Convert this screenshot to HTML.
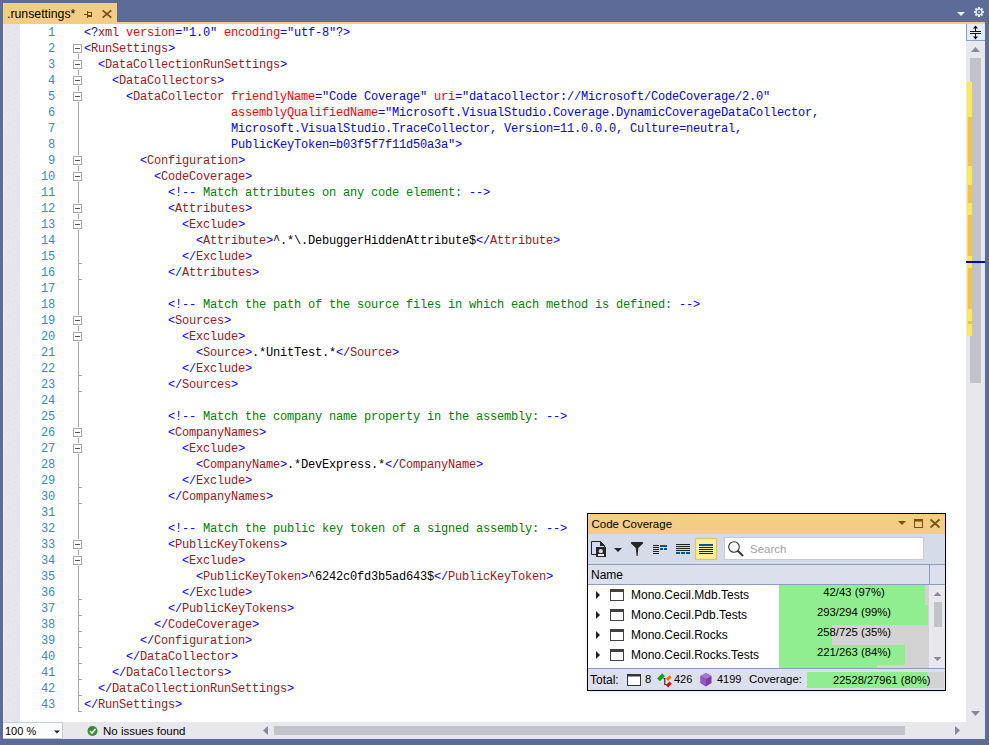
<!DOCTYPE html>
<html><head><meta charset="utf-8">
<style>
*{margin:0;padding:0;box-sizing:border-box}
html,body{width:989px;height:745px;overflow:hidden;background:#5D6B99;position:relative;font-family:"Liberation Sans",sans-serif}
.abs{position:absolute}
#tab{position:absolute;left:3px;top:3px;width:114px;height:21px;background:#F5CC84}
#tabtxt{position:absolute;left:4px;top:4px;font-size:12.3px;color:#000;white-space:nowrap}
#strip{position:absolute;left:3px;top:22px;width:982px;height:2px;background:#F5CC84}
#editor{position:absolute;left:3px;top:24px;width:963px;height:698px;background:#fff;overflow:hidden}
#margin{position:absolute;left:0;top:0;width:17px;height:698px;background:#E6E7ED}
#nums{position:absolute;left:0;top:1px;width:52px}
.num{position:absolute;right:0;width:40px;text-align:right;height:16px;line-height:16px;font-family:"Liberation Mono",monospace;font-size:12px;letter-spacing:-0.2012px;color:#2B91AF}
#code{position:absolute;left:81px;top:1px}
.ln{position:absolute;left:0;height:16px;line-height:16px;white-space:pre;font-family:"Liberation Mono",monospace;font-size:12px;letter-spacing:-0.2012px;color:#000}
.b{color:#0000FF}.d{color:#A31515}.r{color:#FF0000}.g{color:#008000}
#fold{position:absolute;left:70px;top:0}
.fb{position:absolute;left:0;width:9px;height:9px;border:1px solid #A5A5A5;background:#fff}
.fb::after{content:"";position:absolute;left:1px;top:3px;width:5px;height:1px;background:#555}
.fl{position:absolute;left:5px;width:1px;background:#A5A5A5}
.ft{position:absolute;left:5px;width:4px;height:1px;background:#A5A5A5}
#vsb{position:absolute;left:966px;top:24px;width:19px;height:715px;background:#E8E8EC}
#split{position:absolute;left:0;top:0;width:19px;height:17px;background:#E6ECFA;border-left:1px solid #8A9BD0;border-bottom:1px solid #8A9BD0}
#hsb{position:absolute;left:3px;top:722px;width:963px;height:17px;background:#E8E8EC}
#zoom{position:absolute;left:0;top:0;width:60px;height:17px;background:#FCFCFC;border:1px solid #C2CCE0;border-left:none}
#zoomtxt{position:absolute;left:2px;top:1.5px;font-size:11px;color:#000;white-space:nowrap}
#status{position:absolute;left:100px;top:3px;font-size:11.5px;color:#000;white-space:nowrap}
/* panel */
#panel{position:absolute;left:587px;top:513px;width:359px;height:178px;border:1px solid #000;background:#fff;box-shadow:0 1px 5px rgba(0,0,0,0.09)}
#ptitle{position:absolute;left:0;top:0;width:357px;height:20px;background:#F5CC84}
#ptitletxt{position:absolute;left:3.5px;top:4px;font-size:11.5px;color:#000;white-space:nowrap}
#ptool{position:absolute;left:0;top:20px;width:357px;height:31px;background:#D6DBE9;border-bottom:1px solid #8E9BBC}
#phead{position:absolute;left:0;top:51px;width:357px;height:20px;background:#DCE0ED;border-bottom:1px solid #8E9BBC}
#pfoot{position:absolute;left:0;top:154px;width:357px;height:22px;background:#DCE0ED;border-top:1px solid #8E9BBC}
#prows{position:absolute;left:0;top:71px;width:357px;height:83px;background:#fff;overflow:hidden}
.ptxt{position:absolute;font-size:12px;color:#000;white-space:nowrap}
.cov{font-size:11.3px}
</style></head><body>
<div id="tab"><div id="tabtxt">.runsettings*</div>
<svg class="abs" style="left:0;top:0" width="114" height="21">
 <g fill="#6F4A1B">
  <rect x="81" y="11" width="3" height="1"/>
  <rect x="84" y="8" width="1" height="7"/>
  <rect x="84" y="9" width="5" height="1"/>
  <rect x="88" y="9" width="1" height="5"/>
  <rect x="84" y="12" width="5" height="2"/>
 </g>
 <path d="M99.6 7.4 L108.3 14.6 M108.3 7.4 L99.6 14.6" stroke="#6F4A1B" stroke-width="1.6" fill="none"/>
</svg>
</div>
<div id="strip"></div>
<svg class="abs" style="left:950px;top:0" width="39" height="22">
 <path d="M7 12 L15 12 L11 16 Z" fill="#E6EBF8"/>
 <g transform="translate(29,12)" fill="#E6EBF8">
  <circle r="3.6"/>
  <rect x="-1" y="-5" width="2" height="10"/>
  <rect x="-5" y="-1" width="10" height="2"/>
  <rect x="-1" y="-5" width="2" height="10" transform="rotate(45)"/>
  <rect x="-1" y="-5" width="2" height="10" transform="rotate(-45)"/>
  <circle r="2.3" fill="#5D6B99"/>
  <circle r="0.9" fill="#C9D0E6"/>
 </g>
</svg>
<div id="editor">
 <div id="margin"><svg class="abs" style="left:0;top:0" width="17" height="698"><defs><pattern id="dotp" width="17" height="64" patternUnits="userSpaceOnUse"><g fill="#DCDFF0"><rect x="4" y="3" width="1" height="1"/><rect x="6" y="1" width="1" height="1"/><rect x="12" y="1" width="1" height="1"/><rect x="13" y="3" width="1" height="1"/><rect x="2" y="4" width="1" height="1"/><rect x="5" y="7" width="1" height="1"/><rect x="12" y="5" width="1" height="1"/><rect x="13" y="4" width="1" height="1"/><rect x="1" y="9" width="1" height="1"/><rect x="6" y="8" width="1" height="1"/><rect x="12" y="10" width="1" height="1"/><rect x="16" y="9" width="1" height="1"/><rect x="3" y="15" width="1" height="1"/><rect x="5" y="12" width="1" height="1"/><rect x="12" y="14" width="1" height="1"/><rect x="16" y="12" width="1" height="1"/><rect x="3" y="17" width="1" height="1"/><rect x="7" y="16" width="1" height="1"/><rect x="9" y="16" width="1" height="1"/><rect x="16" y="16" width="1" height="1"/><rect x="4" y="20" width="1" height="1"/><rect x="5" y="20" width="1" height="1"/><rect x="10" y="21" width="1" height="1"/><rect x="13" y="23" width="1" height="1"/><rect x="4" y="27" width="1" height="1"/><rect x="5" y="25" width="1" height="1"/><rect x="11" y="26" width="1" height="1"/><rect x="13" y="26" width="1" height="1"/><rect x="1" y="31" width="1" height="1"/><rect x="5" y="29" width="1" height="1"/><rect x="10" y="28" width="1" height="1"/><rect x="13" y="28" width="1" height="1"/><rect x="4" y="33" width="1" height="1"/><rect x="6" y="35" width="1" height="1"/><rect x="10" y="33" width="1" height="1"/><rect x="16" y="35" width="1" height="1"/><rect x="4" y="39" width="1" height="1"/><rect x="6" y="36" width="1" height="1"/><rect x="11" y="38" width="1" height="1"/><rect x="13" y="37" width="1" height="1"/><rect x="4" y="40" width="1" height="1"/><rect x="5" y="41" width="1" height="1"/><rect x="10" y="43" width="1" height="1"/><rect x="15" y="40" width="1" height="1"/><rect x="3" y="47" width="1" height="1"/><rect x="5" y="44" width="1" height="1"/><rect x="9" y="45" width="1" height="1"/><rect x="14" y="44" width="1" height="1"/><rect x="3" y="51" width="1" height="1"/><rect x="6" y="51" width="1" height="1"/><rect x="10" y="51" width="1" height="1"/><rect x="14" y="49" width="1" height="1"/><rect x="2" y="53" width="1" height="1"/><rect x="6" y="53" width="1" height="1"/><rect x="10" y="55" width="1" height="1"/><rect x="16" y="52" width="1" height="1"/><rect x="1" y="56" width="1" height="1"/><rect x="5" y="56" width="1" height="1"/><rect x="11" y="57" width="1" height="1"/><rect x="16" y="58" width="1" height="1"/><rect x="4" y="62" width="1" height="1"/><rect x="6" y="60" width="1" height="1"/><rect x="10" y="61" width="1" height="1"/><rect x="16" y="60" width="1" height="1"/></g></pattern></defs><rect x="0" width="17" height="698" fill="url(#dotp)"/><rect x="0" width="1" height="698" fill="#EFEFF3"/></svg></div>
 <div id="nums"><div class="num" style="top:0px">1</div><div class="num" style="top:16px">2</div><div class="num" style="top:32px">3</div><div class="num" style="top:48px">4</div><div class="num" style="top:64px">5</div><div class="num" style="top:80px">6</div><div class="num" style="top:96px">7</div><div class="num" style="top:112px">8</div><div class="num" style="top:128px">9</div><div class="num" style="top:144px">10</div><div class="num" style="top:160px">11</div><div class="num" style="top:176px">12</div><div class="num" style="top:192px">13</div><div class="num" style="top:208px">14</div><div class="num" style="top:224px">15</div><div class="num" style="top:240px">16</div><div class="num" style="top:256px">17</div><div class="num" style="top:272px">18</div><div class="num" style="top:288px">19</div><div class="num" style="top:304px">20</div><div class="num" style="top:320px">21</div><div class="num" style="top:336px">22</div><div class="num" style="top:352px">23</div><div class="num" style="top:368px">24</div><div class="num" style="top:384px">25</div><div class="num" style="top:400px">26</div><div class="num" style="top:416px">27</div><div class="num" style="top:432px">28</div><div class="num" style="top:448px">29</div><div class="num" style="top:464px">30</div><div class="num" style="top:480px">31</div><div class="num" style="top:496px">32</div><div class="num" style="top:512px">33</div><div class="num" style="top:528px">34</div><div class="num" style="top:544px">35</div><div class="num" style="top:560px">36</div><div class="num" style="top:576px">37</div><div class="num" style="top:592px">38</div><div class="num" style="top:608px">39</div><div class="num" style="top:624px">40</div><div class="num" style="top:640px">41</div><div class="num" style="top:656px">42</div><div class="num" style="top:672px">43</div></div>
 <div id="fold"><div class="fb" style="top:20px"></div><div class="fb" style="top:36px"></div><div class="fb" style="top:52px"></div><div class="fb" style="top:68px"></div><div class="fb" style="top:132px"></div><div class="fb" style="top:148px"></div><div class="fb" style="top:180px"></div><div class="fb" style="top:196px"></div><div class="fb" style="top:292px"></div><div class="fb" style="top:308px"></div><div class="fb" style="top:404px"></div><div class="fb" style="top:420px"></div><div class="fb" style="top:516px"></div><div class="fb" style="top:532px"></div><div class="fl" style="top:30px;height:5px"></div><div class="fl" style="top:46px;height:5px"></div><div class="fl" style="top:62px;height:5px"></div><div class="fl" style="top:78px;height:53px"></div><div class="fl" style="top:142px;height:5px"></div><div class="fl" style="top:158px;height:21px"></div><div class="fl" style="top:190px;height:5px"></div><div class="fl" style="top:206px;height:85px"></div><div class="fl" style="top:302px;height:5px"></div><div class="fl" style="top:318px;height:85px"></div><div class="fl" style="top:414px;height:5px"></div><div class="fl" style="top:430px;height:85px"></div><div class="fl" style="top:526px;height:5px"></div><div class="fl" style="top:542px;height:146px"></div><div class="ft" style="top:239px"></div><div class="ft" style="top:255px"></div><div class="ft" style="top:351px"></div><div class="ft" style="top:367px"></div><div class="ft" style="top:463px"></div><div class="ft" style="top:479px"></div><div class="ft" style="top:575px"></div><div class="ft" style="top:591px"></div><div class="ft" style="top:607px"></div><div class="ft" style="top:623px"></div><div class="ft" style="top:639px"></div><div class="ft" style="top:655px"></div><div class="ft" style="top:671px"></div><div class="ft" style="top:687px"></div></div>
 <div id="code"><div class="ln" style="top:0px"><span class="b">&lt;?</span><span class="d">xml</span> <span class="r">version</span><span class="b">=&quot;1.0&quot;</span> <span class="r">encoding</span><span class="b">=&quot;utf-8&quot;</span><span class="b">?&gt;</span></div><div class="ln" style="top:16px"><span class="b">&lt;</span><span class="d">RunSettings</span><span class="b">&gt;</span></div><div class="ln" style="top:32px">  <span class="b">&lt;</span><span class="d">DataCollectionRunSettings</span><span class="b">&gt;</span></div><div class="ln" style="top:48px">    <span class="b">&lt;</span><span class="d">DataCollectors</span><span class="b">&gt;</span></div><div class="ln" style="top:64px">      <span class="b">&lt;</span><span class="d">DataCollector</span> <span class="r">friendlyName</span><span class="b">=&quot;Code Coverage&quot;</span> <span class="r">uri</span><span class="b">=&quot;datacollector://Microsoft/CodeCoverage/2.0&quot;</span></div><div class="ln" style="top:80px">                     <span class="r">assemblyQualifiedName</span><span class="b">=&quot;Microsoft.VisualStudio.Coverage.DynamicCoverageDataCollector,</span></div><div class="ln" style="top:96px"><span class="b">                     Microsoft.VisualStudio.TraceCollector, Version=11.0.0.0, Culture=neutral,</span></div><div class="ln" style="top:112px"><span class="b">                     PublicKeyToken=b03f5f7f11d50a3a&quot;&gt;</span></div><div class="ln" style="top:128px">        <span class="b">&lt;</span><span class="d">Configuration</span><span class="b">&gt;</span></div><div class="ln" style="top:144px">          <span class="b">&lt;</span><span class="d">CodeCoverage</span><span class="b">&gt;</span></div><div class="ln" style="top:160px">            <span class="b">&lt;!--</span><span class="g"> Match attributes on any code element: </span><span class="b">--&gt;</span></div><div class="ln" style="top:176px">            <span class="b">&lt;</span><span class="d">Attributes</span><span class="b">&gt;</span></div><div class="ln" style="top:192px">              <span class="b">&lt;</span><span class="d">Exclude</span><span class="b">&gt;</span></div><div class="ln" style="top:208px">                <span class="b">&lt;</span><span class="d">Attribute</span><span class="b">&gt;</span><span class="k">^.*\.DebuggerHiddenAttribute$</span><span class="b">&lt;/</span><span class="d">Attribute</span><span class="b">&gt;</span></div><div class="ln" style="top:224px">              <span class="b">&lt;/</span><span class="d">Exclude</span><span class="b">&gt;</span></div><div class="ln" style="top:240px">            <span class="b">&lt;/</span><span class="d">Attributes</span><span class="b">&gt;</span></div><div class="ln" style="top:256px"></div><div class="ln" style="top:272px">            <span class="b">&lt;!--</span><span class="g"> Match the path of the source files in which each method is defined: </span><span class="b">--&gt;</span></div><div class="ln" style="top:288px">            <span class="b">&lt;</span><span class="d">Sources</span><span class="b">&gt;</span></div><div class="ln" style="top:304px">              <span class="b">&lt;</span><span class="d">Exclude</span><span class="b">&gt;</span></div><div class="ln" style="top:320px">                <span class="b">&lt;</span><span class="d">Source</span><span class="b">&gt;</span><span class="k">.*UnitTest.*</span><span class="b">&lt;/</span><span class="d">Source</span><span class="b">&gt;</span></div><div class="ln" style="top:336px">              <span class="b">&lt;/</span><span class="d">Exclude</span><span class="b">&gt;</span></div><div class="ln" style="top:352px">            <span class="b">&lt;/</span><span class="d">Sources</span><span class="b">&gt;</span></div><div class="ln" style="top:368px"></div><div class="ln" style="top:384px">            <span class="b">&lt;!--</span><span class="g"> Match the company name property in the assembly: </span><span class="b">--&gt;</span></div><div class="ln" style="top:400px">            <span class="b">&lt;</span><span class="d">CompanyNames</span><span class="b">&gt;</span></div><div class="ln" style="top:416px">              <span class="b">&lt;</span><span class="d">Exclude</span><span class="b">&gt;</span></div><div class="ln" style="top:432px">                <span class="b">&lt;</span><span class="d">CompanyName</span><span class="b">&gt;</span><span class="k">.*DevExpress.*</span><span class="b">&lt;/</span><span class="d">CompanyName</span><span class="b">&gt;</span></div><div class="ln" style="top:448px">              <span class="b">&lt;/</span><span class="d">Exclude</span><span class="b">&gt;</span></div><div class="ln" style="top:464px">            <span class="b">&lt;/</span><span class="d">CompanyNames</span><span class="b">&gt;</span></div><div class="ln" style="top:480px"></div><div class="ln" style="top:496px">            <span class="b">&lt;!--</span><span class="g"> Match the public key token of a signed assembly: </span><span class="b">--&gt;</span></div><div class="ln" style="top:512px">            <span class="b">&lt;</span><span class="d">PublicKeyTokens</span><span class="b">&gt;</span></div><div class="ln" style="top:528px">              <span class="b">&lt;</span><span class="d">Exclude</span><span class="b">&gt;</span></div><div class="ln" style="top:544px">                <span class="b">&lt;</span><span class="d">PublicKeyToken</span><span class="b">&gt;</span><span class="k">^6242c0fd3b5ad643$</span><span class="b">&lt;/</span><span class="d">PublicKeyToken</span><span class="b">&gt;</span></div><div class="ln" style="top:560px">              <span class="b">&lt;/</span><span class="d">Exclude</span><span class="b">&gt;</span></div><div class="ln" style="top:576px">            <span class="b">&lt;/</span><span class="d">PublicKeyTokens</span><span class="b">&gt;</span></div><div class="ln" style="top:592px">          <span class="b">&lt;/</span><span class="d">CodeCoverage</span><span class="b">&gt;</span></div><div class="ln" style="top:608px">        <span class="b">&lt;/</span><span class="d">Configuration</span><span class="b">&gt;</span></div><div class="ln" style="top:624px">      <span class="b">&lt;/</span><span class="d">DataCollector</span><span class="b">&gt;</span></div><div class="ln" style="top:640px">    <span class="b">&lt;/</span><span class="d">DataCollectors</span><span class="b">&gt;</span></div><div class="ln" style="top:656px">  <span class="b">&lt;/</span><span class="d">DataCollectionRunSettings</span><span class="b">&gt;</span></div><div class="ln" style="top:672px"><span class="b">&lt;/</span><span class="d">RunSettings</span><span class="b">&gt;</span></div></div>
</div>
<div id="vsb">
 <div id="split">
  <svg class="abs" style="left:-1px;top:0" width="19" height="17">
   <rect x="4" y="7" width="11" height="1" fill="#111"/>
   <rect x="4" y="9" width="11" height="1" fill="#111"/>
   <rect x="9" y="3" width="1" height="4" fill="#111"/>
   <rect x="9" y="10" width="1" height="4" fill="#111"/>
   <path d="M9.5 1.5 L12 4.5 L7 4.5 Z" fill="#111"/>
   <path d="M9.5 15.5 L12 12.5 L7 12.5 Z" fill="#111"/>
  </svg>
 </div>
 <svg class="abs" style="left:0;top:0" width="19" height="715">
  <path d="M5 28 L14 28 L9.5 23 Z" fill="#868999"/>
  <rect x="4" y="34" width="11" height="325" fill="#C2C3C9"/>
  <path d="M5 687 L14 687 L9.5 692 Z" fill="#868999"/>
  <g>
   <rect x="1" y="58" width="5" height="35" fill="#FCE85C"/>
   <rect x="1.6" y="93" width="3.8" height="49" fill="#F6C43A"/>
   <rect x="1" y="142" width="5" height="19" fill="#FCE85C"/>
   <rect x="1.6" y="161" width="3.8" height="18" fill="#F6C43A"/>
   <rect x="1" y="179" width="5" height="12" fill="#FCE85C"/>
   <rect x="1.6" y="191" width="3.8" height="41" fill="#F6C43A"/>
   <rect x="1" y="232" width="5" height="12" fill="#FCE85C"/>
   <rect x="1.6" y="244" width="3.8" height="41" fill="#F6C43A"/>
   <rect x="1" y="285" width="5" height="12" fill="#FCE85C"/>
   <rect x="1.6" y="297" width="3.8" height="3" fill="#F6C43A"/>
   <rect x="1" y="300" width="5" height="12" fill="#FCE85C"/>
  </g>
  <rect x="0" y="237" width="19" height="2" fill="#0000C0"/>
 </svg>
</div>
<div id="hsb">
 <div id="zoom"><div id="zoomtxt">100 %</div>
  <svg class="abs" style="left:0;top:0" width="60" height="17"><path d="M51 7.5 L57 7.5 L54 10.5 Z" fill="#1E1E3C"/></svg>
 </div>
 <svg class="abs" style="left:0;top:0" width="963" height="17">
  <circle cx="89.5" cy="9" r="5" fill="#388A34"/>
  <path d="M87 9 L89 11 L92.5 7" stroke="#fff" stroke-width="1.6" fill="none"/>
  <path d="M265 4 L265 13 L260 8.5 Z" fill="#868999"/>
  <rect x="271" y="4" width="631" height="9" fill="#C2C3C9"/>
  <path d="M952 4 L952 13 L957 8.5 Z" fill="#868999"/>
 </svg>
 <div id="status">No issues found</div>
</div>
<div id="panel">
 <div id="ptitle"><div id="ptitletxt">Code Coverage</div>
  <svg class="abs" style="left:0;top:0" width="357" height="20">
   <path d="M310 7 L318 7 L314 11 Z" fill="#6E5518"/>
   <rect x="326.5" y="5.5" width="8" height="8" fill="none" stroke="#6E5518" stroke-width="1"/>
   <rect x="326" y="5" width="9" height="2.5" fill="#6E5518"/>
   <path d="M342.5 5.5 L351.5 13.5 M351.5 5.5 L342.5 13.5" stroke="#6E5518" stroke-width="1.7" fill="none"/>
  </svg>
 </div>
 <div id="ptool">
  <svg class="abs" style="left:0;top:0" width="357" height="30">
   <!-- doc+disk -->
   <path d="M3.5 7.5 L12.5 7.5 L16.5 11.5 L16.5 20.5 L3.5 20.5 Z" fill="none" stroke="#252525" stroke-width="1"/>
   <path d="M12 7 L17 12 L12 12 Z" fill="#252525"/>
   <rect x="8" y="13" width="10" height="10" fill="#252525"/>
   <circle cx="12.8" cy="17.2" r="2.1" fill="#D8D8D8"/>
   <rect x="10" y="20" width="6" height="2" fill="#F0F0F0"/>
   <path d="M26 14 L34 14 L30 18 Z" fill="#252525"/>
   <!-- funnel -->
   <path d="M43.5 8 L54.5 8 Q55.5 8 55 9.5 L50.3 14 L49.6 22 L48.6 22 L47.8 14 L43 9.5 Q42.5 8 43.5 8 Z" fill="#252525"/>
   <!-- icon4 -->
   <g fill="#1E1E1E"><rect x="65" y="11" width="6" height="1"/><rect x="65" y="13" width="6" height="1"/><rect x="65" y="15" width="6" height="1"/><rect x="65" y="17" width="6" height="1"/><rect x="65" y="19" width="6" height="1"/></g>
   <g fill="#00539C"><rect x="72" y="11" width="7" height="2"/><rect x="72" y="14" width="3" height="2"/><rect x="76" y="14" width="3" height="2"/></g>
   <!-- icon5 -->
   <g fill="#1E1E1E"><rect x="88" y="10" width="14" height="1"/><rect x="88" y="12" width="14" height="1"/><rect x="88" y="14" width="14" height="1"/><rect x="88" y="16" width="14" height="1"/></g>
   <g fill="#00539C"><rect x="88" y="18" width="4" height="2"/><rect x="93" y="18" width="4" height="2"/><rect x="98" y="18" width="4" height="2"/></g>
   <!-- icon6 button -->
   <rect x="107.5" y="4.5" width="21" height="21" fill="#FFEF9C" stroke="#E5C365" stroke-width="1.3"/>
   <rect x="111" y="10" width="14" height="2" fill="#00539C"/>
   <g fill="#1E1E1E"><rect x="111" y="13" width="14" height="1"/><rect x="111" y="15" width="14" height="1"/><rect x="111" y="17" width="14" height="1"/><rect x="111" y="19" width="14" height="1"/></g>
   <!-- search -->
   <rect x="136.5" y="3.5" width="199" height="22" fill="#fff" stroke="#C9C9CF" stroke-width="1"/>
   <circle cx="146" cy="13" r="5.3" fill="none" stroke="#333" stroke-width="1.1"/>
   <path d="M149.8 16.8 L155 22" stroke="#333" stroke-width="2"/>
  </svg>
  <div class="ptxt" style="left:162px;top:8.5px;color:#A2A2A2;font-size:11.5px">Search</div>
 </div>
 <div id="phead"><div class="ptxt" style="left:3px;top:3px">Name</div><div class="abs" style="left:341px;top:0;width:1px;height:19px;background:#8E9BBC"></div></div>
 <div id="prows">
  <div class="abs" style="left:191px;top:0px;width:150px;height:20px;background:#D3D3D3"></div><div class="abs" style="left:191px;top:0px;width:146px;height:20px;background:#90EE90"></div><svg class="abs" style="left:0;top:0px" width="40" height="20"><path d="M8 6 L12 10 L8 14 Z" fill="#1E1E1E"/><rect x="22.5" y="4.5" width="13" height="11" fill="#fff" stroke="#424242" stroke-width="1"/><rect x="22" y="4" width="14" height="3" fill="#424242"/></svg><div class="ptxt" style="left:43px;top:3px">Mono.Cecil.Mdb.Tests</div><div class="ptxt cov" style="left:191px;width:150px;text-align:center;top:1px">42/43 (97%)</div><div class="abs" style="left:191px;top:20px;width:150px;height:20px;background:#D3D3D3"></div><div class="abs" style="left:191px;top:20px;width:149px;height:20px;background:#90EE90"></div><svg class="abs" style="left:0;top:20px" width="40" height="20"><path d="M8 6 L12 10 L8 14 Z" fill="#1E1E1E"/><rect x="22.5" y="4.5" width="13" height="11" fill="#fff" stroke="#424242" stroke-width="1"/><rect x="22" y="4" width="14" height="3" fill="#424242"/></svg><div class="ptxt" style="left:43px;top:23px">Mono.Cecil.Pdb.Tests</div><div class="ptxt cov" style="left:191px;width:150px;text-align:center;top:21px">293/294 (99%)</div><div class="abs" style="left:191px;top:40px;width:150px;height:20px;background:#D3D3D3"></div><div class="abs" style="left:191px;top:40px;width:53px;height:20px;background:#90EE90"></div><svg class="abs" style="left:0;top:40px" width="40" height="20"><path d="M8 6 L12 10 L8 14 Z" fill="#1E1E1E"/><rect x="22.5" y="4.5" width="13" height="11" fill="#fff" stroke="#424242" stroke-width="1"/><rect x="22" y="4" width="14" height="3" fill="#424242"/></svg><div class="ptxt" style="left:43px;top:43px">Mono.Cecil.Rocks</div><div class="ptxt cov" style="left:191px;width:150px;text-align:center;top:41px">258/725 (35%)</div><div class="abs" style="left:191px;top:60px;width:150px;height:20px;background:#D3D3D3"></div><div class="abs" style="left:191px;top:60px;width:126px;height:20px;background:#90EE90"></div><svg class="abs" style="left:0;top:60px" width="40" height="20"><path d="M8 6 L12 10 L8 14 Z" fill="#1E1E1E"/><rect x="22.5" y="4.5" width="13" height="11" fill="#fff" stroke="#424242" stroke-width="1"/><rect x="22" y="4" width="14" height="3" fill="#424242"/></svg><div class="ptxt" style="left:43px;top:63px">Mono.Cecil.Rocks.Tests</div><div class="ptxt cov" style="left:191px;width:150px;text-align:center;top:61px">221/263 (84%)</div><div class="abs" style="left:191px;top:80px;width:150px;height:20px;background:#D3D3D3"></div><div class="abs" style="left:191px;top:80px;width:98px;height:20px;background:#90EE90"></div><svg class="abs" style="left:341px;top:0" width="16" height="83"><rect width="16" height="83" fill="#E8E8EC"/><path d="M4.5 11 L12.5 11 L8.5 7 Z" fill="#868999"/><rect x="5" y="17" width="8" height="25" fill="#C2C3C9"/><path d="M4.5 72 L12.5 72 L8.5 76 Z" fill="#868999"/></svg>
 </div>
 <div id="pfoot">
  <div class="ptxt" style="left:2px;top:4px">Total:</div>
  <svg class="abs" style="left:0;top:0" width="357" height="21">
   <rect x="39.5" y="5.5" width="13" height="11" fill="#fff" stroke="#333" stroke-width="1"/>
   <rect x="39" y="5" width="14" height="2.5" fill="#333"/>
   <g transform="translate(73,8.3) rotate(45)"><rect x="-2" y="-3.6" width="4" height="7.2" fill="#16A316"/></g>
   <path d="M75.5 9.5 L76.8 9.5 L76.8 15.5 L78.5 15.5" stroke="#222" stroke-width="1.1" fill="none"/>
   <g transform="translate(80.8,9.2) rotate(45)"><rect x="-1.6" y="-2.5" width="3.2" height="5" fill="#FF7000"/></g>
   <g transform="translate(80.8,15.5) rotate(45)"><rect x="-1.6" y="-2.5" width="3.2" height="5" fill="#F00000"/></g>
   <path d="M118 4 L123.5 7 L123.5 14 L118 17.5 L112.5 14 L112.5 7 Z" fill="#7B3FA8"/>
   <path d="M118 4 L123.5 7 L118 10 L112.5 7 Z" fill="#A878D0"/>
   <path d="M112.5 7 L118 10 L118 17.5 L112.5 14 Z" fill="#9058C0"/>
   <rect x="219" y="3" width="137" height="16" fill="#D3D3D3"/>
   <rect x="219" y="3" width="121" height="16" fill="#90EE90"/>
  </svg>
  <div class="ptxt" style="left:57px;top:4px;font-size:11.3px">8</div>
  <div class="ptxt" style="left:86px;top:4px;font-size:11px">426</div>
  <div class="ptxt" style="left:129px;top:4px;font-size:11px">4199</div>
  <div class="ptxt" style="left:161px;top:4px;font-size:11.5px">Coverage:</div>
  <div class="ptxt" style="left:245px;top:4.5px;font-size:11.1px">22528/27961 (80%)</div>
 </div>
</div>
</body></html>
